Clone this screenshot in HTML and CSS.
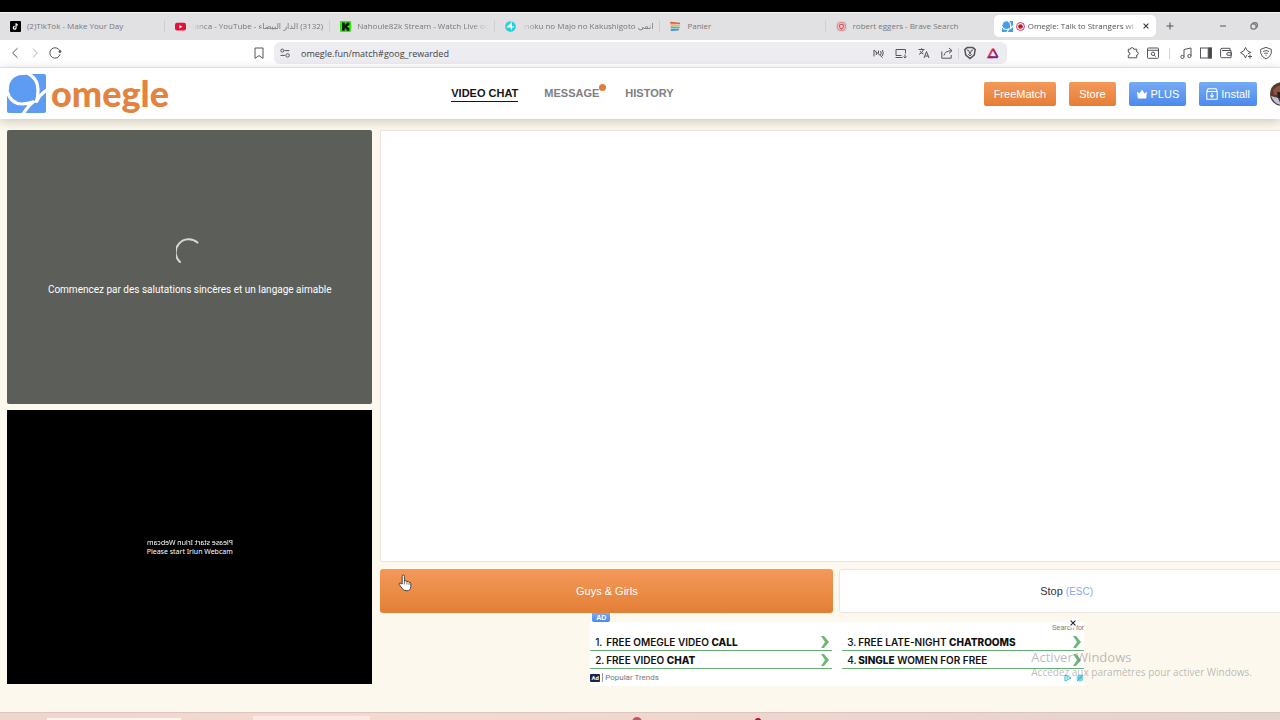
FILE: index.html
```html
<!DOCTYPE html>
<html lang="fr">

<head>
    <meta charset="UTF-8">
    <title>Omegle: Talk to Strangers</title>
    <link rel="stylesheet" href="styles.css">
</head>

<body>
    <div class="top-strip"></div>

    <!-- Tabs -->
    <div class="tabs">
        <div class="tab">
            <svg class="favicon" viewBox="0 0 12 12"><rect width="12" height="12" rx="1" fill="#000"/><path d="M6.6 2.4v5a1.5 1.5 0 1 1-1.5-1.5M6.6 2.6c.2 1.2 1 1.8 2.1 1.9" fill="none" stroke="#fff" stroke-width="1.3"/></svg>
            <span class="tab-title">(2)TikTok - Make Your Day</span>
        </div>
        <div class="tab">
            <svg class="favicon" viewBox="0 0 12 12"><rect y="2" width="12" height="8.4" rx="2.2" fill="#e5103c"/><path d="M4.8 4.3v3.8L8 6.2z" fill="#fff"/></svg>
            <span class="tab-title rtl" dir="rtl">(3132) الدار البيضاء - lanca - YouTube</span>
        </div>
        <div class="tab">
            <svg class="favicon" viewBox="0 0 12 12"><rect width="12" height="12" rx="1" fill="#35e813"/><path d="M2.2 1.5h3v2.3h1V2.7h1.1V1.5h3v3H9.1v1H8v1h1.1v1.1h1.2v2.9h-3V9.3H6.2V8.2h-1v2.3h-3z" fill="#0c1f08"/></svg>
            <span class="tab-title fade">Nahoule82k Stream - Watch Live on</span>
        </div>
        <div class="tab">
            <svg class="favicon" viewBox="0 0 12 12"><circle cx="6" cy="6" r="5.8" fill="#27cfdc"/><path d="M2.6 6.6 7 2.2v4.4zM7 6.6h2.8M7 6.6v2.8" fill="#fff" stroke="#fff" stroke-width="1.2"/></svg>
            <span class="tab-title rtl" dir="rtl">انمي imoku no Majo no Kakushigoto</span>
        </div>
        <div class="tab">
            <svg class="favicon" viewBox="0 0 12 12"><path d="M0 .8 11 1.8v2L.6 3.2z" fill="#e3564f"/><path d="M.6 3.2 11 3.8 10.7 6 .8 5.6z" fill="#f2b13f"/><path d="M.8 5.6 10.7 6l-.6 2.1L1 8.3z" fill="#56b96a"/><path d="M1 8.3l9.1-.2-.8 2.2L.8 11z" fill="#4592cf"/><path d="M.6 3.3 11 3.8M.8 5.7l9.9.3M1 8.3l9.1-.2" stroke="#e9e7e8" stroke-width=".6"/></svg>
            <span class="tab-title">Panier</span>
        </div>
        <div class="tab">
            <svg class="favicon" viewBox="0 0 12 12"><rect x=".5" y=".5" width="11" height="11" rx="3" fill="#d9c9cb"/><circle cx="6" cy="6" r="4.6" fill="none" stroke="#db7f82" stroke-width="1"/><path d="M3.8 4.4 6 3.6l2.2.8-.4 2.8L6 9 4.2 7.2z" fill="#f3d5d2" stroke="#d8545a" stroke-width="1.2"/></svg>
            <span class="tab-title">robert eggers - Brave Search</span>
        </div>
        <div class="tab active">
            <svg class="favicon" viewBox="0 0 39 39"><rect width="39" height="39" fill="#459ee8"/><path d="M0 0h21L9 4 0 18z" fill="#fff"/><circle cx="15" cy="14" r="12.500" fill="#459ee8"/><path d="M0 18q4 12 15 12 6 0 11-2l-9 11M20-1q11 5 11 17 0 6-2 12l11-12" fill="none" stroke="#fff" stroke-width="4"/></svg>
            <svg class="record" viewBox="0 0 10 10"><circle cx="5" cy="5" r="4.4" fill="#fff" stroke="#c42945" stroke-width="1"/><circle cx="5" cy="5" r="2.6" fill="#c8102e"/></svg>
            <span class="tab-title fade">Omegle: Talk to Strangers wi</span>
            <button class="tab-close" aria-label="Fermer l'onglet"><svg viewBox="0 0 6 6"><path d="M.6.6l4.8 4.8M5.4.6.6 5.400" stroke="#333" stroke-width="1.1"/></svg></button>
        </div>
        <button class="icon-btn new-tab" aria-label="Nouvel onglet"><svg viewBox="0 0 14 14"><path d="M7 3.500v7M3.500 7h7"/></svg></button>
        <div class="window-buttons">
            <button class="icon-btn" aria-label="Réduire"><svg viewBox="0 0 14 14"><path d="M4 7h6"/></svg></button>
            <button class="icon-btn" aria-label="Restaurer"><svg viewBox="0 0 14 14"><rect x="4" y="5" width="5" height="5" rx="1"/><path d="M5.500 5V4.500q0-.7.8-.7H9q1.300 0 1.300 1.300v2.700q0 .7-.8.7H9"/></svg></button>
        </div>
    </div>

    <!-- Toolbar -->
    <div class="toolbar">
        <div class="toolbar-left">
            <button class="icon-btn" aria-label="Retour"><svg viewBox="0 0 14 14"><path d="M9.500 2.200 4.600 7l4.900 4.800"/></svg></button>
            <button class="icon-btn disabled" aria-label="Avancer"><svg viewBox="0 0 14 14"><path d="M5 2.600 9.300 7 5 11.400"/></svg></button>
            <button class="icon-btn" aria-label="Actualiser"><svg viewBox="0 0 14 14"><path d="M12.100 8.200A5.200 5.200 0 1 1 11.800 4.800"/><circle cx="12" cy="5.600" r="1" fill="#55555c"/></svg></button>
            <button class="icon-btn bookmark" aria-label="Favori"><svg viewBox="0 0 14 14"><path d="M3 2h8v10.400L7 9.600l-4 2.800z"/></svg></button>
        </div>
        <div class="address-bar">
            <svg class="site-info" viewBox="0 0 14 14"><circle cx="4.300" cy="4.600" r="1.500"/><path d="M6.400 4.600h5M2.500 9.400h4.400"/><circle cx="9.600" cy="9.400" r="1.700"/></svg>
            <input class="url" type="text" value="omegle.fun/match#goog_rewarded" aria-label="Adresse">
            <button class="icon-btn" aria-label="Son bloqué"><svg viewBox="0 0 14 14"><path d="M3 10.500V4M3 4l8.500 7.500M5.300 9V6M7.500 7.500V4.500M9.500 9q1.400-2 0-4M11.300 10q1.700-3 .2-6"/></svg></button>
            <button class="icon-btn" aria-label="Installer"><svg viewBox="0 0 14 14"><path d="M7.500 9.500H2v-6h9.500v4M1.500 11.500h7M11 8.500v3.500M9.500 10.500 11 12l1.500-1.500"/></svg></button>
            <button class="icon-btn" aria-label="Traduire"><svg viewBox="0 0 14 14"><path d="M1.500 3.500h6M4.500 2.300v1.200M6.500 3.500Q5.500 7 2 8.500M3 5q1.500 2.500 3.500 3M7 12l2.500-6.500L12 12M8 10h3.200"/></svg></button>
            <button class="icon-btn" aria-label="Partager"><svg viewBox="0 0 14 14"><path d="M1.800 5.500v6.700h9.400V9M4 9.500q.5-4.500 7.500-4.800M9 2l3 2.700-3 2.700"/></svg></button>
            <span class="sep tight"></span>
            <button class="icon-btn" aria-label="Brave Shields"><svg viewBox="0 0 14 14"><path d="M4.200 1.600h5.600l2.400 2-1 5.400L7 12.600 2.800 9l-1-5.400z" stroke-width="1.500"/><path d="M4 4.200h1.500L7 8l1.500-3.800H10M5.300 8 7 10l1.700-2"/></svg></button>
            <button class="icon-btn" aria-label="Récompenses"><svg viewBox="0 0 14 14"><path d="M7 2.800 2.300 11.200H7" stroke="#e8384f" stroke-width="2"/><path d="M7 2.800 11.700 11.200" stroke="#a12478" stroke-width="2"/><path d="M2.300 11.200h9.400" stroke="#652a91" stroke-width="2"/></svg></button>
        </div>
        <div class="toolbar-right">
            <button class="icon-btn" aria-label="Extensions"><svg viewBox="0 0 14 14"><path d="M2.300 3.200h2.200a1.600 1.600 0 0 1 3.200 0h3v2.600a1.600 1.600 0 0 1 0 3.200v2.800H2.300V9.300a1.600 1.600 0 0 0 0-3.200z"/></svg></button>
            <button class="icon-btn" aria-label="Recherche"><svg viewBox="0 0 14 14"><rect x="1.500" y="2" width="11" height="10.300" rx="1"/><path d="M1.500 4.300h11M8.300 9.200l1.500 1.500"/><circle cx="7" cy="7.800" r="1.700"/></svg></button>
            <span class="sep"></span>
            <button class="icon-btn" aria-label="Musique"><svg viewBox="0 0 14 14"><path d="M5 10.800V3.500l7-1.500v8"/><circle cx="3.400" cy="10.900" r="1.600"/><circle cx="10.400" cy="10" r="1.600"/></svg></button>
            <button class="icon-btn" aria-label="Panneau latéral"><svg viewBox="0 0 14 14"><rect x="1.500" y="2" width="11" height="10"/><path d="M9.200 2h3.300v10H9.200z" fill="#46464d"/></svg></button>
            <button class="icon-btn" aria-label="Portefeuille"><svg viewBox="0 0 14 14"><path d="M11 4.500V2.300H3Q1.600 2.300 1.600 4v6.500q0 1.200 1.200 1.200H12V4.500H3"/><path d="M12.500 6.700H9q-1.300 0-1.300 1.300T9 9.300h3.500z"/></svg></button>
            <button class="icon-btn" aria-label="Leo"><svg viewBox="0 0 14 14"><path d="M6.500 1.500q.8 3.800 5.300 5Q9.800 7 8.800 8M8 9q-.8 1-1.500 3-.8-3.800-5-5.300 4.200-1.200 5-5.200M11 8.500v4M9 10.500h4"/></svg></button>
            <button class="icon-btn" aria-label="VPN"><svg viewBox="0 0 14 14"><path d="M7 1.400l5.300 1.900v3.900Q11.500 10.800 7 13 2.500 10.800 1.700 7.200V3.300z"/><path d="M4 5.500q3-2 6 0M5.200 7.500q1.800-1.100 3.600 0M6.500 9.300h1"/></svg></button>
        </div>
    </div>

    <!-- Site header -->
    <header class="site-header">
        <a class="brand" href="#">
            <svg class="brand-icon" viewBox="0 0 39 39"><rect width="39" height="39" rx="2" fill="#5e9cf3"/><path d="M0 0h21L9 4 0 19z" fill="#fff"/><circle cx="15" cy="14" r="13" fill="#5e9cf3"/><path d="M0 17q3.500 13 15 13 6 0 11.500-2.200Q22 31 16 40M20-1q11 5 11 17 0 6-1.500 11.500Q33 20 40 16" fill="none" stroke="#fff" stroke-width="3.200" stroke-linejoin="round"/></svg>
            <span class="brand-name">omegle</span>
        </a>
        <nav class="site-nav">
            <a class="current" href="#">VIDEO CHAT</a>
            <a class="has-dot" href="#">MESSAGE</a>
            <a href="#">HISTORY</a>
        </nav>
        <div class="actions">
            <button class="btn orange">FreeMatch</button>
            <button class="btn orange">Store</button>
            <button class="btn blue"><svg viewBox="0 0 12 12"><path d="M1 3.500 3.500 5.500 6 1.500l2.500 4L11 3.500l-.8 7H1.800z" fill="#fff"/></svg>PLUS</button>
            <button class="btn blue"><svg viewBox="0 0 12 12"><path d="M.8 3.500h10.400v7.700H.8zM.8 3.500 2 .8h8l1.200 2.700M6 4.800V9M4.200 7.300 6 9.100l1.800-1.800" fill="none" stroke="#fff" stroke-width="1.100"/></svg>Install</button>
            <svg class="avatar" viewBox="0 0 24 24"><circle cx="12" cy="12" r="12" fill="#56382f"/><path d="M3 8q5-6 12-5v10H4z" fill="#8b5244"/><path d="M1 14l7 2 3 7Q4 22 1 14z" fill="#b9c4dc"/><path d="M7 10h6v6H8z" fill="#2b1c1b"/></svg>
        </div>
    </header>

    <!-- Video chat -->
    <main class="chat">
        <section class="videos">
            <div class="video stranger">
                <svg class="spinner" viewBox="0 0 28 28"><path d="M4 24A12.500 12.500 0 0 1 21.500 4.600" fill="none" stroke="#d6d7d5" stroke-width="2" stroke-linecap="round"/></svg>
                <p>Commencez par des salutations sincères et un langage aimable</p>
            </div>
            <div class="video webcam">
                <p class="mirrored">Please start Iriun Webcam</p>
                <p>Please start Iriun Webcam</p>
            </div>
        </section>

        <section class="conversation">
            <div class="messages"></div>
            <div class="controls">
                <button class="control start">Guys &amp; Girls</button>
                <button class="control stop">Stop <span>(ESC)</span></button>
            </div>
            <aside class="ad">
                <span class="ad-tag">AD</span>
                <div class="ad-box">
                    <div class="ad-head">Search for</div>
                    <div class="ad-links">
                        <a href="#"><i>1.</i><span>FREE OMEGLE VIDEO <b>CALL</b></span><svg viewBox="0 0 8 12"><path d="M0 0h3l5 6-5 6H0l4-6z"/></svg></a>
                        <a href="#"><i>3.</i><span>FREE LATE-NIGHT <b>CHATROOMS</b></span><svg viewBox="0 0 8 12"><path d="M0 0h3l5 6-5 6H0l4-6z"/></svg></a>
                        <a href="#"><i>2.</i><span>FREE VIDEO <b>CHAT</b></span><svg viewBox="0 0 8 12"><path d="M0 0h3l5 6-5 6H0l4-6z"/></svg></a>
                        <a href="#"><i>4.</i><span><b>SINGLE</b> WOMEN FOR FREE</span><svg viewBox="0 0 8 12"><path d="M0 0h3l5 6-5 6H0l4-6z"/></svg></a>
                    </div>
                    <div class="ad-foot">
                        <span class="ad-badge">Ad</span>
                        <span class="ad-source">Popular Trends</span>
                        <svg viewBox="0 0 20 8"><path d="M1 1l6 3-6 3zM3 3v2" fill="none" stroke="#2fb9cf"/><circle cx="16" cy="4" r="3.500" fill="#7fd6e3"/><path d="M13 7l6-6M14 4h4" stroke="#2fb9cf"/></svg>
                    </div>
                    <button class="ad-close" aria-label="Fermer"><svg viewBox="0 0 6 6"><path d="M.6.6l4.800 4.800M5.400.6.6 5.400" stroke="#222" stroke-width="1.100"/></svg></button>
                </div>
            </aside>
        </section>
    </main>

    <div class="taskbar">
        <span class="task"></span>
        <span class="task open"></span>
        <span class="task-dot"></span>
        <span class="task-dot red"></span>
    </div>

    <div class="watermark">
        <strong>Activer Windows</strong>
        <span>Accédez aux paramètres pour activer Windows.</span>
    </div>

    <svg class="pointer" viewBox="0 0 14 18"><path d="M4.200 10V2.300q0-1.300 1.100-1.300t1.100 1.300V7q2-.8 2.600.5 1.600-.5 2 .7 1.800-.1 1.800 1.500v2.800q0 4.300-4 4.300-3.300 0-4.600-2.500L1.200 10.600Q.8 9.300 2 9z" fill="#fff" stroke="#3b3431" stroke-width=".9"/><path d="M6.400 7v3.300M8.900 7.600v2.900M11 8.400v2.400" stroke="#3b3431" stroke-width=".7"/></svg>
</body>

</html>
```
FILE: styles.css
```css
* {
    box-sizing: border-box;
}

body {
    margin: 0;
    height: 100vh;
    display: flex;
    flex-direction: column;
    overflow: hidden;
    position: relative;
    font-family: "Liberation Sans", Arial, sans-serif;
    font-size: 10px;
    background-color: #fcf8ee;
}

p {
    margin: 0;
}

a {
    color: inherit;
    text-decoration: none;
}

button {
    font-family: inherit;
    padding: 0;
    border: none;
    background: none;
    cursor: pointer;
}

svg {
    display: block;
    flex-shrink: 0;
}

.top-strip {
    height: 12px;
    background-color: #000;
}

/* Tabs */
.tabs {
    display: flex;
    align-items: center;
    height: 28px;
    padding-bottom: 1px;
    background-color: #e1e0e3;
    border-top: 1px solid #f4f4f5;
    font-family: "Open Sans", "DejaVu Sans", sans-serif;
    font-size: 8px;
    color: #77777b;
}

.tab {
    flex: 0 1 12.9%;
    display: flex;
    align-items: center;
    gap: 6px;
    min-width: 0;
    height: 12px;
    padding: 0 6px 0 10px;
    border-right: 1px solid #cfced2;
}

.tab:nth-child(6) {
    border-right: none;
}

.tab-title {
    flex: 1;
    min-width: 0;
    overflow: hidden;
    white-space: nowrap;
    line-height: 12px;
}

.tab-title.rtl {
    mask-image: linear-gradient(to right, transparent, #000 14px);
}

.tab-title.fade {
    mask-image: linear-gradient(to left, transparent, #000 16px);
}

.favicon {
    width: 11px;
    height: 11px;
}

.tab.active {
    flex-basis: 162px;
    flex-shrink: 0;
    gap: 3px;
    height: 22px;
    margin-left: 3px;
    padding: 0 7px 0 8px;
    border: none;
    border-radius: 5px;
    background-color: #fff;
    color: #55555a;
}

.record {
    width: 9px;
    height: 9px;
}

.tab-close svg {
    width: 6px;
    height: 6px;
}

.new-tab {
    margin-left: 7px;
}

.window-buttons {
    display: flex;
    gap: 17px;
    margin-left: auto;
    padding-right: 19px;
}

.icon-btn {
    width: 14px;
    height: 14px;
    flex-shrink: 0;
}

.icon-btn svg,
.site-info {
    width: 14px;
    height: 14px;
    fill: none;
    stroke: #55555c;
    stroke-width: 1;
}

.icon-btn.disabled {
    opacity: 0.45;
}

/* Toolbar */
.toolbar {
    display: flex;
    align-items: center;
    height: 28px;
    padding-bottom: 1px;
    background-color: #fff;
    border-bottom: 1px solid #ececef;
}

.toolbar-left {
    display: flex;
    gap: 6px;
    flex: 0 0 274px;
    padding: 0 8px;
}

.bookmark {
    margin-left: auto;
}

.address-bar {
    flex: 1;
    display: flex;
    align-items: center;
    gap: 9px;
    height: 22px;
    padding: 0 7px 0 4px;
    border-radius: 6px;
    background-color: #edecf0;
}

.url {
    flex: 1;
    min-width: 0;
    padding: 0;
    border: none;
    outline: none;
    background: none;
    font-family: "Open Sans", sans-serif;
    font-size: 9px;
    color: #3f3f45;
}

.toolbar-right {
    display: flex;
    align-items: center;
    justify-content: flex-end;
    gap: 6px;
    flex: 0 0 273px;
    padding-right: 7px;
}

.sep {
    width: 1px;
    height: 11px;
    margin: 0 3px;
    background-color: #d3d2d7;
}

.sep.tight {
    margin: 0 -5px;
}

/* Site header */
.site-header {
    display: flex;
    align-items: center;
    height: 51px;
    padding-left: 7px;
    background-color: #fff;
    box-shadow: 0 2px 10px rgba(90, 80, 50, 0.3);
    position: relative;
}

.brand {
    flex: 0 0 34.9%;
    display: flex;
    align-items: center;
    gap: 5px;
}

.brand-icon {
    width: 39px;
    height: 39px;
}

.brand-name {
    font-family: Lato, sans-serif;
    font-size: 36px;
    line-height: 39px;
    font-weight: 900;
    color: #e2833f;
}

.site-nav {
    display: flex;
    gap: 26px;
    font-size: 11px;
    font-weight: bold;
    line-height: 16px;
    color: #808080;
}

.site-nav a {
    position: relative;
    border-bottom: 1px solid transparent;
}

.site-nav .current {
    color: #161616;
    border-color: #161616;
}

.has-dot::after {
    content: "";
    position: absolute;
    top: -1px;
    right: -7px;
    width: 7px;
    height: 7px;
    border-radius: 50%;
    background-color: #e07f3a;
}

.actions {
    display: flex;
    align-items: center;
    gap: 13px;
    margin-left: auto;
    margin-right: -14px;
}

.btn {
    display: flex;
    align-items: center;
    gap: 3px;
    height: 24px;
    padding: 0 7px;
    border-radius: 2px;
    font-size: 11px;
    color: #fff;
}

.btn svg {
    width: 12px;
    height: 12px;
}

.orange {
    padding: 0 10px;
    background: linear-gradient(#f4995a, #e67d35);
}

.blue {
    background: linear-gradient(#76abf5, #4b89ec);
}

.avatar {
    width: 24px;
    height: 24px;
}

/* Video chat */
.chat {
    flex: 1;
    min-height: 0;
    display: grid;
    grid-template-columns: 2fr 5fr;
    gap: 8px;
    margin-right: -14px;
    padding: 11px 0 28px 7px;
}

.videos {
    display: flex;
    flex-direction: column;
    gap: 6px;
}

.video {
    flex: 1;
    display: flex;
    flex-direction: column;
    align-items: center;
    justify-content: center;
    color: #fff;
}

.stranger {
    gap: 17px;
    border-radius: 2px;
    background-color: #5c5e5a;
    font-family: Roboto, sans-serif;
    line-height: 14px;
}

.spinner {
    width: 28px;
    height: 28px;
}

.webcam {
    background-color: #000;
    font-family: "Noto Sans", sans-serif;
    font-size: 7px;
    line-height: 9px;
}

.mirrored {
    transform: scaleX(-1);
}

.conversation {
    display: flex;
    flex-direction: column;
    min-width: 0;
}

.messages {
    flex: 1;
    background-color: #fff;
    border: 1px solid #e8e6df;
    border-radius: 2px;
}

.controls {
    display: flex;
    gap: 6px;
    margin-top: 7px;
}

.control {
    flex: 1;
    height: 44px;
    border-radius: 3px;
    font-size: 11px;
}

.start {
    background: linear-gradient(#f4995a, #e37f36);
    color: #fff;
}

.stop {
    background-color: #fff;
    border: 1px solid #e8e6df;
    color: #333;
}

.stop span {
    font-size: 10px;
    color: #8ba6ee;
}

/* Ad */
.ad {
    width: 494px;
    height: 71px;
    margin: 0 auto;
    display: flex;
    flex-direction: column;
}

.ad-tag {
    width: 18px;
    margin-left: 2px;
    border-radius: 0 0 2px 2px;
    background: linear-gradient(#76abf5, #4b89ec);
    font-size: 7px;
    font-weight: bold;
    line-height: 9px;
    text-align: center;
    color: #fff;
}

.ad-box {
    flex: 1;
    position: relative;
    background-color: #fff;
}

.ad-head {
    font-size: 7px;
    line-height: 11px;
    text-align: right;
    color: #777;
}

.ad-links {
    display: grid;
    grid-template-columns: 1fr 1fr;
    column-gap: 10px;
}

.ad-links a {
    display: flex;
    align-items: center;
    height: 18px;
    padding: 0 3px 0 5px;
    border-bottom: 1px solid #68ad72;
    font-family: Inter, sans-serif;
    font-size: 10px;
    font-weight: 600;
    color: #111;
}

.ad-links i {
    width: 11px;
    font-style: normal;
    font-weight: 500;
}

.ad-links b {
    font-weight: 800;
}

.ad-links svg {
    width: 8px;
    height: 12px;
    margin-left: auto;
    fill: #6fb67a;
}

.ad-foot {
    display: flex;
    align-items: center;
    gap: 2px;
    height: 17px;
    font-family: Roboto, sans-serif;
    font-size: 8px;
    color: #777;
}

.ad-badge {
    width: 10px;
    border-radius: 1px;
    background-color: #14284f;
    font-size: 6px;
    font-weight: bold;
    line-height: 8px;
    text-align: center;
    color: #fff;
}

.ad-source {
    padding-left: 2px;
    border-left: 1px solid #999;
}

.ad-foot svg {
    width: 20px;
    height: 8px;
    margin-left: auto;
}

.ad-close {
    position: absolute;
    top: -4px;
    right: 6px;
    padding: 2px;
    background-color: #fff;
    border-radius: 50%;
}

.ad-close svg {
    width: 6px;
    height: 6px;
}

/* Taskbar */
.taskbar {
    display: flex;
    height: 8px;
    padding-left: 47px;
    border-top: 1px solid #d9c6c0;
    background: linear-gradient(to right, #f0d5cf, #f5d8d1 30%, #edd3ce 75%, #e3d4cf);
}

.task {
    width: 134px;
    margin-top: 5px;
    background-color: #fdf3ef;
}

.task.open {
    width: 117px;
    margin: 3px 262px 0 72px;
    background-color: #fde7e3;
}

.task-dot {
    width: 10px;
    height: 10px;
    margin: 4px 112px 0 0;
    border-radius: 50%;
    background-color: #c4545f;
}

.task-dot.red {
    width: 8px;
    margin: 5px 0 0;
    background-color: #c40d1d;
}

/* Overlays */
.watermark {
    position: absolute;
    right: 28px;
    bottom: 41px;
    font-family: "Open Sans", sans-serif;
    color: rgba(130, 130, 130, 0.55);
    pointer-events: none;
}

.watermark strong {
    display: block;
    font-size: 13px;
    font-weight: normal;
    line-height: 16px;
}

.watermark span {
    font-size: 10px;
    line-height: 14px;
}

.pointer {
    position: absolute;
    left: 398px;
    top: 574px;
    width: 14px;
    height: 18px;
}
```
